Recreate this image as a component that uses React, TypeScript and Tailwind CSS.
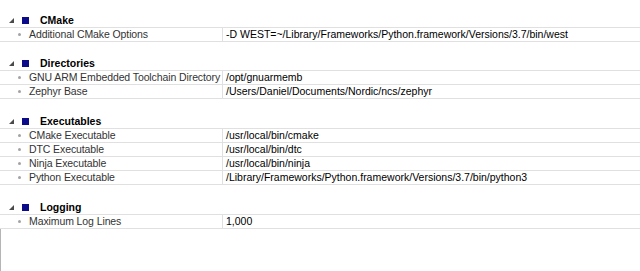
import React from 'react';

type Row = { label: string; value: string };
type Group = { title: string; pad: string; rows: Row[] };

const groups: Group[] = [
  {
    title: 'CMake',
    pad: 'pt-[13px]',
    rows: [{ label: 'Additional CMake Options', value: '-D WEST=~/Library/Frameworks/Python.framework/Versions/3.7/bin/west' }],
  },
  {
    title: 'Directories',
    pad: 'pt-[14px]',
    rows: [
      { label: 'GNU ARM Embedded Toolchain Directory', value: '/opt/gnuarmemb' },
      { label: 'Zephyr Base', value: '/Users/Daniel/Documents/Nordic/ncs/zephyr' },
    ],
  },
  {
    title: 'Executables',
    pad: 'pt-[15px]',
    rows: [
      { label: 'CMake Executable', value: '/usr/local/bin/cmake' },
      { label: 'DTC Executable', value: '/usr/local/bin/dtc' },
      { label: 'Ninja Executable', value: '/usr/local/bin/ninja' },
      { label: 'Python Executable', value: '/Library/Frameworks/Python.framework/Versions/3.7/bin/python3' },
    ],
  },
  {
    title: 'Logging',
    pad: 'pt-[15px]',
    rows: [{ label: 'Maximum Log Lines', value: '1,000' }],
  },
];

const Header: React.FC<{ title: string }> = ({ title }) => (
  <div className="h-[14px] flex items-center pl-[9px]">
    <svg width="5" height="5" viewBox="0 0 5 5" className="mt-[1px] shrink-0">
      <polygon points="5,0 5,5 0,5" fill="#4a4a4a" />
    </svg>
    <div className="w-[7px] h-[7px] shrink-0 bg-[#0c0c8a] ml-[8px]" />
    <span className="ml-[11px] font-bold text-black">{title}</span>
  </div>
);

const PropRow: React.FC<{ row: Row; first: boolean }> = ({ row, first }) => (
  <div className={`flex shrink-0 border-b border-[#e0e0e0] ${first ? 'h-[15px] border-t' : 'h-[14px]'}`}>
    <div className="w-[222px] shrink-0 flex items-center pl-[18px] overflow-hidden">
      <div className="w-[3px] h-[3px] shrink-0 rounded-full bg-[#a3a3a3]" />
      <span className="ml-[8px] text-[#333333] whitespace-nowrap tracking-[-0.1px]">{row.label}</span>
    </div>
    <div className="flex-1 flex items-center border-l border-[#e0e0e0] pl-[3px] text-black whitespace-nowrap">
      {row.value}
    </div>
  </div>
);

export default function App() {
  return (
    <div className="w-[640px] h-[271px] bg-white flex flex-col overflow-hidden font-['Liberation_Sans',Arial,sans-serif] text-[10.5px] leading-none">
      {groups.map((g) => (
        <div key={g.title} className={`shrink-0 ${g.pad}`}>
          <Header title={g.title} />
          {g.rows.map((r, i) => (
            <PropRow key={r.label} row={r} first={i === 0} />
          ))}
        </div>
      ))}
      <div className="flex-1 border-l border-[#b5b5b5]" />
    </div>
  );
}
